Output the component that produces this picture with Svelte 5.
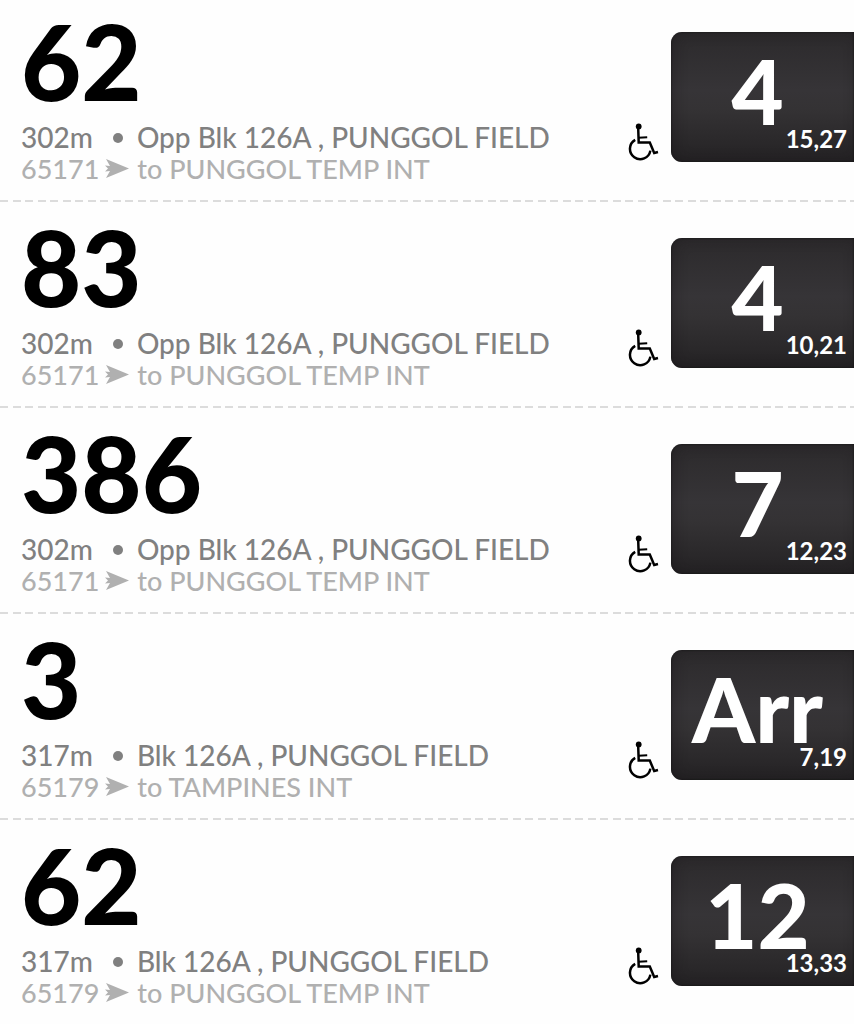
<script lang="ts">
	interface Arrival {
		service: string;
		distance: string;
		stop: string;
		code: string;
		destination: string;
		next: string;
		later: string;
	}

	const arrivals: Arrival[] = [
		{ service: '62', distance: '302m', stop: 'Opp Blk 126A , PUNGGOL FIELD', code: '65171', destination: 'PUNGGOL TEMP INT', next: '4', later: '15,27' },
		{ service: '83', distance: '302m', stop: 'Opp Blk 126A , PUNGGOL FIELD', code: '65171', destination: 'PUNGGOL TEMP INT', next: '4', later: '10,21' },
		{ service: '386', distance: '302m', stop: 'Opp Blk 126A , PUNGGOL FIELD', code: '65171', destination: 'PUNGGOL TEMP INT', next: '7', later: '12,23' },
		{ service: '3', distance: '317m', stop: 'Blk 126A , PUNGGOL FIELD', code: '65179', destination: 'TAMPINES INT', next: 'Arr', later: '7,19' },
		{ service: '62', distance: '317m', stop: 'Blk 126A , PUNGGOL FIELD', code: '65179', destination: 'PUNGGOL TEMP INT', next: '12', later: '13,33' }
	];
</script>

<ul class="arrivals">
	{#each arrivals as bus}
		<li class="row">
			<div class="info">
				<div class="service">{bus.service}</div>
				<div class="line stop">
					<span>{bus.distance}</span>
					<span class="bullet"></span>
					<span>{bus.stop}</span>
				</div>
				<div class="line dest">
					<span>{bus.code}</span>
					<svg class="arrow" width="24" height="22" viewBox="0 0 24 22" aria-hidden="true">
						<path d="M1 1 L24 10.5 L1 20 L5 13 L0 13.5 L3 10.5 L0 7.5 L5 8 Z" fill="currentColor" />
					</svg>
					<span>to {bus.destination}</span>
				</div>
			</div>
			<svg class="wheelchair" width="31" height="38" viewBox="0 0 31 38" role="img" aria-label="Wheelchair accessible">
				<circle cx="10.7" cy="3.4" r="2.9" />
				<g fill="none" stroke="#000" stroke-width="2.5">
					<path d="M10.2 5 L10.7 19.6 H21.8 L26.2 30 L30 29" />
					<path d="M10.5 14.8 L19.2 14.3" stroke-width="2" />
					<path d="M7.2 16.8 A10.3 10.3 0 1 0 22.4 27.6" />
				</g>
			</svg>
			<div class="board">
				<span class="next">{bus.next}</span>
				<span class="later">{bus.later}</span>
			</div>
		</li>
	{/each}
</ul>

<style>
	:global(body) {
		margin: 0;
		background: #fefefe;
		overflow: hidden;
	}

	.arrivals {
		list-style: none;
		margin: -4px 0 0;
		padding: 0;
		font-family: Lato, 'Open Sans', sans-serif;
	}

	.row {
		display: flex;
		align-items: flex-start;
		box-sizing: border-box;
		height: 206px;
		padding: 20px 0 0 21px;
		background: repeating-linear-gradient(
				90deg,
				#dcdcdc 0 8px,
				transparent 8px 13px,
				#dcdcdc 13px 21px,
				transparent 21px 25px
			)
			left bottom / 100% 2px no-repeat;
	}

	.row:last-child {
		background: none;
	}

	.info {
		flex: 1;
		min-width: 0;
	}

	.service {
		margin-bottom: 16px;
		font-size: 104px;
		font-weight: 900;
		line-height: 90px;
		color: #000;
	}

	.line {
		display: flex;
		align-items: center;
		font-size: 28px;
		font-weight: 500;
		line-height: 31px;
		white-space: nowrap;
	}

	.stop {
		color: #808080;
	}

	.dest {
		font-size: 27px;
		color: #b0b0b0;
	}

	.bullet {
		width: 10px;
		height: 10px;
		margin: 0 14px 0 20px;
		border-radius: 50%;
		background: currentColor;
	}

	.arrow {
		margin: 0 8px 0 6px;
	}

	.wheelchair {
		flex-shrink: 0;
		margin: 107px 12px 0 0;
	}

	.board {
		position: relative;
		flex-shrink: 0;
		box-sizing: border-box;
		width: 183px;
		height: 130px;
		margin-top: 16px;
		padding-right: 10px;
		border-radius: 11px 0 0 11px;
		background: linear-gradient(#2c2a2c, #363437 45%, #343234 60%, #242224);
		box-shadow: inset 3px 0 14px rgba(20, 18, 20, 0.3), inset 0 0 2px #111;
		text-align: center;
		color: #fff;
	}

	.next {
		font-size: 90px;
		font-weight: 900;
		line-height: 116px;
	}

	.later {
		position: absolute;
		right: 7px;
		bottom: 8px;
		font-size: 24px;
		font-weight: 700;
		line-height: 30px;
	}
</style>
